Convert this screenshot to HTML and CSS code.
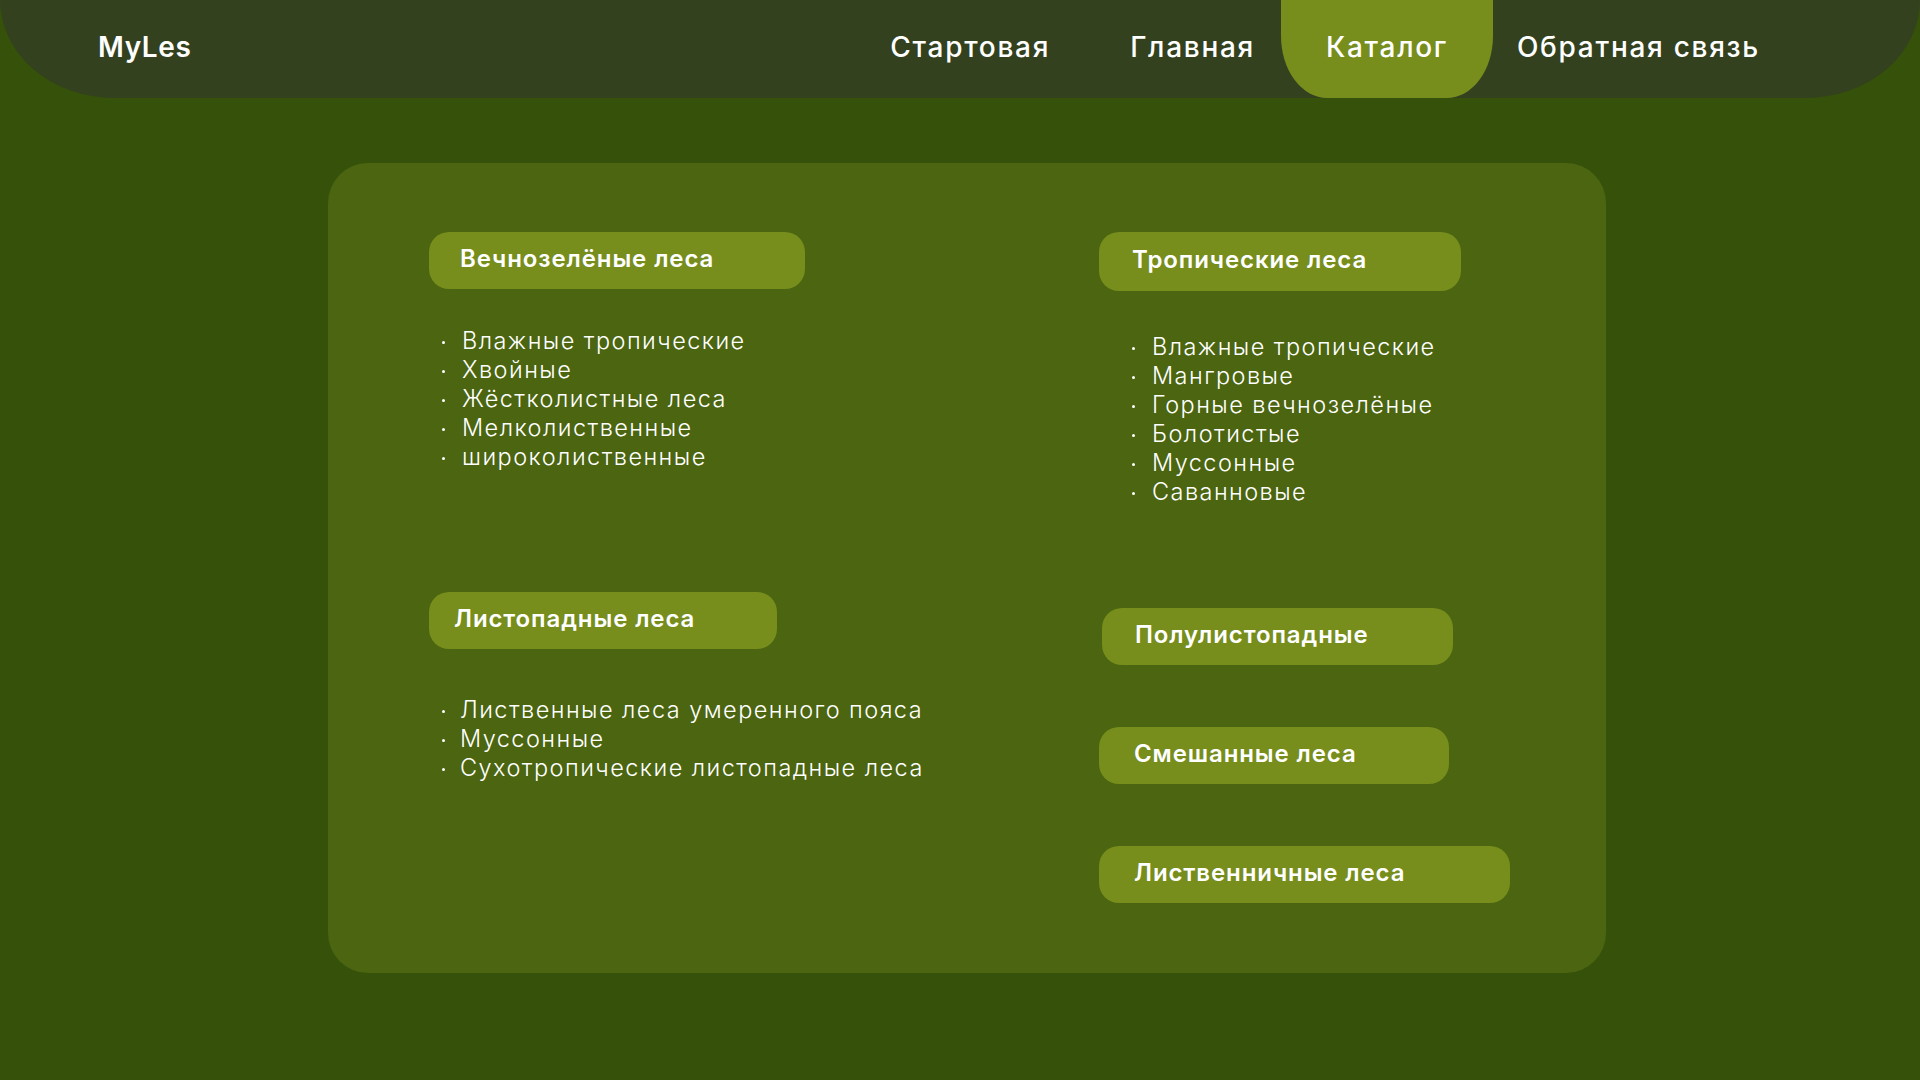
FILE: index.html
```html
<!DOCTYPE html>
<html lang="ru">
<head>
<meta charset="utf-8">
<title>MyLes — Каталог</title>
<link rel="stylesheet" href="styles.css">
</head>
<body>
<header class="topbar">
  <div class="logo">MyLes</div>
  <nav class="nav">
    <a class="nav-link" href="#">Стартовая</a>
    <a class="nav-link nav-link--main" href="#">Главная</a>
    <a class="nav-link nav-link--active" href="#">Каталог</a>
    <a class="nav-link nav-link--feedback" href="#">Обратная связь</a>
  </nav>
</header>
<main class="page">
  <section class="catalog">
    <div class="col">
      <div class="group">
        <h2 class="badge badge--evergreen">Вечнозелёные леса</h2>
        <ul class="list list--first">
          <li>Влажные тропические</li>
          <li>Хвойные</li>
          <li>Жёстколистные леса</li>
          <li>Мелколиственные</li>
          <li>широколиственные</li>
        </ul>
      </div>
      <div class="group group--deciduous">
        <h2 class="badge badge--deciduous">Листопадные леса</h2>
        <ul class="list list--deciduous">
          <li>Лиственные леса умеренного пояса</li>
          <li>Муссонные</li>
          <li>Сухотропические листопадные леса</li>
        </ul>
      </div>
    </div>
    <div class="col col--right">
      <div class="group">
        <h2 class="badge badge--tropical">Тропические леса</h2>
        <ul class="list list--right">
          <li>Влажные тропические</li>
          <li>Мангровые</li>
          <li>Горные вечнозелёные</li>
          <li>Болотистые</li>
          <li>Муссонные</li>
          <li>Саванновые</li>
        </ul>
      </div>
      <h2 class="badge badge--semi">Полулистопадные</h2>
      <h2 class="badge badge--mixed">Смешанные леса</h2>
      <h2 class="badge badge--larch">Лиственничные леса</h2>
    </div>
  </section>
</main>
</body>
</html>
```

FILE: styles.css
```css
* {
  box-sizing: border-box;
}

html, body {
  margin: 0;
  padding: 0;
}

body {
  width: 1920px;
  height: 1080px;
  overflow: hidden;
  background: #36520a;
  color: #ffffff;
  font-family: "Inter", "Open Sans", "Noto Sans", sans-serif;
}

/* ---------- header ---------- */
.topbar {
  display: flex;
  align-items: stretch;
  height: 98px;
  padding-left: 98px;
  padding-right: 160px;
  background: #33411f;
  border-radius: 0 0 114px 114px / 0 0 98px 98px;
}

.logo {
  align-self: center;
  padding-bottom: 5px;
  font-size: 28px;
  font-weight: 600;
  letter-spacing: 0.6px;
}

.nav {
  display: flex;
  align-items: stretch;
  margin-left: auto;
}

.nav-link {
  display: flex;
  align-items: center;
  padding-bottom: 5px;
  color: #ffffff;
  text-decoration: none;
  font-size: 28px;
  font-weight: 500;
  letter-spacing: 1.7px;
}

.nav-link--main {
  margin-left: 80px;
}

.nav-link--active {
  margin-left: 26px;
  padding: 0 45px 5px;
  background: #778d1c;
  border-radius: 0 0 46px 46px / 0 0 62px 62px;
}

.nav-link--feedback {
  margin-left: 24px;
}

/* ---------- catalog card ---------- */
.page {
  padding-top: 65px;
  padding-left: 328px;
}

.catalog {
  display: grid;
  grid-template-columns: 670px 1fr;
  width: 1278px;
  height: 810px;
  padding: 69px 0 0 101px;
  background: #4b6510;
  border-radius: 40px;
}

.col {
  display: flex;
  flex-direction: column;
  align-items: flex-start;
}

.group {
  display: flex;
  flex-direction: column;
  align-items: flex-start;
}

.badge {
  display: flex;
  align-items: center;
  height: 57px;
  margin: 0;
  padding: 0 0 4px 32px;
  background: #778d1c;
  border-radius: 20px;
  font-size: 24px;
  font-weight: 600;
  letter-spacing: 0.9px;
}

.badge--evergreen { width: 376px; padding-left: 31px; }
.badge--tropical  { width: 362px; height: 59px; padding-left: 33px; }
.badge--deciduous { width: 348px; padding-left: 25px; }
.badge--semi      { width: 351px; margin-top: 102px; margin-left: 3px; padding-left: 33px; }
.badge--mixed     { width: 350px; margin-top: 62px; padding-left: 35px; }
.badge--larch     { width: 411px; margin-top: 62px; padding-left: 35px; }

.group--deciduous {
  margin-top: 121px;
}

/* ---------- lists ---------- */
.list {
  margin: 37px 0 0;
  padding: 0 0 0 33px;
  list-style: none;
  font-family: "Inter Light", "Inter", "Open Sans", sans-serif;
  font-size: 23.5px;
  font-weight: 300;
  line-height: 29px;
  letter-spacing: 1.45px;
}

.list li {
  position: relative;
  white-space: nowrap;
}

.list li::before {
  content: "";
  position: absolute;
  left: -20px;
  top: 15px;
  width: 3px;
  height: 3px;
  border-radius: 50%;
  background: #ffffff;
}

.list--deciduous {
  margin-top: 46px;
  padding-left: 31px;
}

.list--deciduous li::before {
  left: -18px;
}

.list--right {
  margin-top: 41px;
  padding-left: 53px;
}
```
